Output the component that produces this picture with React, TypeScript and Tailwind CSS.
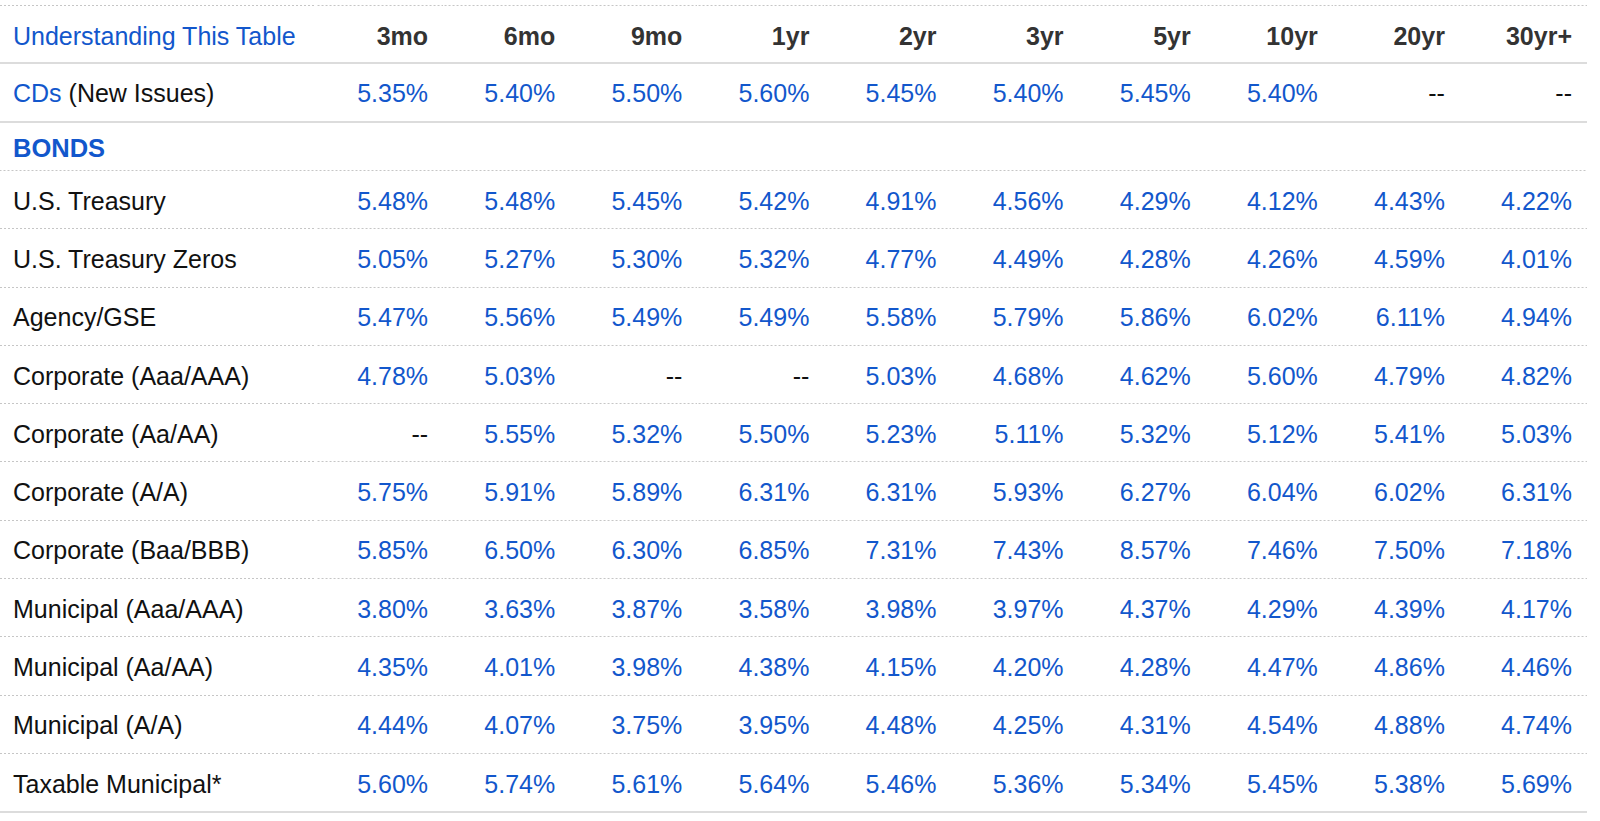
import React from "react";

const cols = ["3mo", "6mo", "9mo", "1yr", "2yr", "3yr", "5yr", "10yr", "20yr", "30yr+"];

const rows: { label: string; vals: string[] }[] = [
  { label: "U.S. Treasury", vals: ["5.48%", "5.48%", "5.45%", "5.42%", "4.91%", "4.56%", "4.29%", "4.12%", "4.43%", "4.22%"] },
  { label: "U.S. Treasury Zeros", vals: ["5.05%", "5.27%", "5.30%", "5.32%", "4.77%", "4.49%", "4.28%", "4.26%", "4.59%", "4.01%"] },
  { label: "Agency/GSE", vals: ["5.47%", "5.56%", "5.49%", "5.49%", "5.58%", "5.79%", "5.86%", "6.02%", "6.11%", "4.94%"] },
  { label: "Corporate (Aaa/AAA)", vals: ["4.78%", "5.03%", "--", "--", "5.03%", "4.68%", "4.62%", "5.60%", "4.79%", "4.82%"] },
  { label: "Corporate (Aa/AA)", vals: ["--", "5.55%", "5.32%", "5.50%", "5.23%", "5.11%", "5.32%", "5.12%", "5.41%", "5.03%"] },
  { label: "Corporate (A/A)", vals: ["5.75%", "5.91%", "5.89%", "6.31%", "6.31%", "5.93%", "6.27%", "6.04%", "6.02%", "6.31%"] },
  { label: "Corporate (Baa/BBB)", vals: ["5.85%", "6.50%", "6.30%", "6.85%", "7.31%", "7.43%", "8.57%", "7.46%", "7.50%", "7.18%"] },
  { label: "Municipal (Aaa/AAA)", vals: ["3.80%", "3.63%", "3.87%", "3.58%", "3.98%", "3.97%", "4.37%", "4.29%", "4.39%", "4.17%"] },
  { label: "Municipal (Aa/AA)", vals: ["4.35%", "4.01%", "3.98%", "4.38%", "4.15%", "4.20%", "4.28%", "4.47%", "4.86%", "4.46%"] },
  { label: "Municipal (A/A)", vals: ["4.44%", "4.07%", "3.75%", "3.95%", "4.48%", "4.25%", "4.31%", "4.54%", "4.88%", "4.74%"] },
  { label: "Taxable Municipal*", vals: ["5.60%", "5.74%", "5.61%", "5.64%", "5.46%", "5.36%", "5.34%", "5.45%", "5.38%", "5.69%"] },
];

const cds = ["5.35%", "5.40%", "5.50%", "5.60%", "5.45%", "5.40%", "5.45%", "5.40%", "--", "--"];

const grid = "grid grid-cols-[316px_repeat(10,minmax(0,1fr))]";
const dotBottom =
  "bg-[linear-gradient(to_right,#c6c6c6_2px,transparent_2px)] bg-[length:4px_1px] bg-repeat-x bg-bottom";
const dotTop =
  "bg-[linear-gradient(to_right,#c6c6c6_2px,transparent_2px)] bg-[length:4px_1px] bg-repeat-x bg-top";

function Val({ v }: { v: string }) {
  return v === "--" ? (
    <span className="text-[#111]">--</span>
  ) : (
    <span className="text-[#1257cc]">{v}</span>
  );
}

export default function App() {
  return (
    <div
      className="bg-white w-[1600px] h-[821px] pt-[5px] text-[25px] leading-[28px] text-[#111]"
      style={{ fontFamily: '"Liberation Sans", Arial, Helvetica, sans-serif' }}
    >
      <div className="w-[1587px]">
        {/* Header */}
        <div className={grid}>
          <div className={`${dotTop} pt-[17px] pb-[12px] pl-[13px] border-b-2 border-[#dcdcdc] text-[#1257cc]`}>
            Understanding This Table
          </div>
          {cols.map((c) => (
            <div
              key={c}
              className={`${dotTop} pt-[17px] pb-[12px] pr-[15px] text-right font-bold text-[#333] border-b-2 border-[#dcdcdc]`}
            >
              {c}
            </div>
          ))}
        </div>

        {/* CDs */}
        <div className={grid}>
          <div className="pt-[15px] pb-[14px] pl-[13px] border-b-2 border-[#dcdcdc]">
            <span className="text-[#1257cc]">CDs</span> (New Issues)
          </div>
          {cds.map((v, i) => (
            <div key={i} className="pt-[15px] pb-[14px] pr-[15px] text-right border-b-2 border-[#dcdcdc]">
              <Val v={v} />
            </div>
          ))}
        </div>

        {/* BONDS */}
        <div className={`${dotBottom} pt-[11px] pb-[9px] pl-[13px] font-bold text-[25.5px] text-[#1257cc]`}>
          BONDS
        </div>

        {rows.map((r, ri) => {
          const last = ri === rows.length - 1;
          const cell = last
            ? "h-[59.3px] pt-[15.7px] border-b-2 border-[#dcdcdc]"
            : `h-[58.3px] pt-[15.7px] ${dotBottom}`;
          return (
            <div key={r.label} className={grid}>
              <div className={`${cell} pl-[13px] text-[#111]`}>{r.label}</div>
              {r.vals.map((v, i) => (
                <div key={i} className={`${cell} pr-[15px] text-right`}>
                  <Val v={v} />
                </div>
              ))}
            </div>
          );
        })}
      </div>
    </div>
  );
}
